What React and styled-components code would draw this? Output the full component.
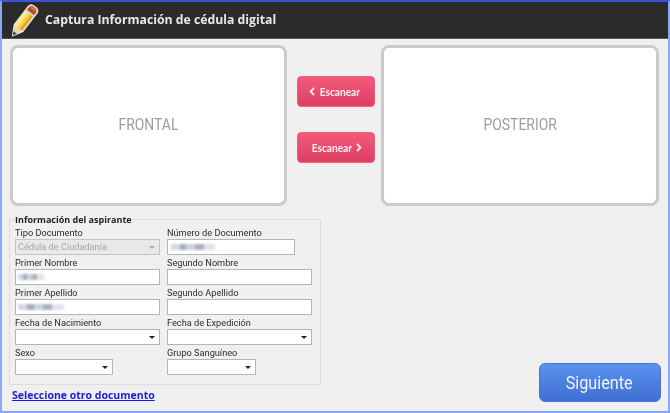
import React from "react";
import styled, { createGlobalStyle } from "styled-components";

const Global = createGlobalStyle`
  html, body { margin: 0; padding: 0; background: #f0f0f0; }
  #root { width: 670px; height: 413px; overflow: hidden; }
  * { box-sizing: border-box; }
`;

const Frame = styled.div`
  width: 670px; height: 413px;
  display: flex; flex-direction: column;
  background: #f0f0f0;
  border-top: 2px solid #3a56d8;
  border-left: 2px solid #8aa6f7;
  border-right: 2px solid #8aa6f7;
  border-bottom: 2px solid #8aa6f7;
  font-family: "Open Sans", sans-serif;
  filter: blur(0.3px);
`;

const Header = styled.header`
  height: 37px; flex: none;
  background: #2b2b2b;
  border-bottom: 1px solid #555;
  display: flex; align-items: center;
  padding: 0 0 0 8px; gap: 5px;
`;

const Title = styled.h1`
  margin: 0; color: #e8e8e8;
  font: 700 12.25px/1 "Open Sans", sans-serif;
`;

const ScanRow = styled.section`
  display: flex; align-items: flex-start;
  padding: 6px 9px 0 8px;
`;

const Card = styled.div`
  width: ${p => p.$w}px; height: 161px;
  background: #fff;
  border: 3px solid #cbcbcb;
  border-radius: 8px;
  display: flex; align-items: center; justify-content: center;
  padding-bottom: 2px;
  color: #9c9c9c;
  font: 400 16px/1 "Roboto", sans-serif;
`;

const CardLabel = styled.span`
  display: inline-block;
  transform: scaleX(0.87);
`;

const ScanButtons = styled.div`
  width: 95px; padding: 31px 0 0 10px;
  display: flex; flex-direction: column; gap: 25px;
`;

const ScanButton = styled.button`
  width: 78px; height: 31px; padding: 0;
  border: 1px solid #e9637f; border-radius: 4px;
  background: linear-gradient(#f25a7c, #de3f63);
  color: #fdeef1;
  font: 700 11.5px/1 "Lato", sans-serif;
  display: flex; align-items: center; justify-content: center; gap: 2px;
`;

const ScanLabel = styled.span`
  display: inline-block;
  transform: scaleX(0.88);
`;

const Bottom = styled.div`
  flex: 1; display: flex; justify-content: space-between; align-items: flex-end;
  padding: 0 7px 9px 7px;
`;

const Left = styled.div`
  display: flex; flex-direction: column;
`;

const Fieldset = styled.fieldset`
  margin: 0; width: 312px; height: 171px;
  padding: 1px 0 0 5px;
  border: 1px solid #dcdcdc;
  display: grid;
  grid-template-columns: 152px 1fr;
  grid-auto-rows: 30px;
  align-content: start;
`;

const Legend = styled.legend`
  padding: 0; margin-left: 0;
  font: 700 9px/11px "Open Sans", sans-serif;
  color: #222;
`;

const Field = styled.label`
  display: flex; flex-direction: column;
  height: 30px;
`;

const Caption = styled.span`
  height: 13px;
  font: 400 9.2px/13px "Roboto", sans-serif;
  color: #2c2c2c;
  white-space: nowrap;
`;

const Box = styled.div`
  width: ${p => p.$w}px; height: 16px;
  background: ${p => (p.$disabled ? "#e9e9e9" : "#fff")};
  border: 1px solid ${p => (p.$disabled ? "#c4c4c4" : "#b5b5b5")};
  display: flex; align-items: center; justify-content: space-between;
  padding: 0 4px 0 2px;
  font: 400 9.2px/1 "Roboto", sans-serif;
  color: #a5a5a5;
  overflow: hidden;
`;

const Redacted = styled.span`
  display: block; width: ${p => p.$w}px; height: 6px;
  margin-left: ${p => p.$x || 0}px;
  background: linear-gradient(90deg, #d3d8e0 0 20%, #a5acb9 20% 35%, #ccd2dc 35% 55%, #aab1bd 55% 75%, #e0e4ea 75% 100%);
  filter: blur(1.3px);
`;

const Arrow = styled.span`
  margin-left: auto;
  width: 0; height: 0;
  border-left: 3px solid transparent;
  border-right: 3px solid transparent;
  border-top: 3px solid ${p => (p.$disabled ? "#a8a8a8" : "#222")};
`;

const OtherLink = styled.a`
  margin: 3px 0 0 3px;
  font: 700 10.5px/14px "Open Sans", sans-serif;
  color: #1a1ae6;
  text-decoration: underline;
`;

const NextButton = styled.button`
  width: 122px; height: 39px; padding: 0 2px 0 0;
  border: 1px solid #4f72d8; border-radius: 6px;
  background: linear-gradient(#5a92ef, #3f6fd2);
  color: #eef4ff;
  font: 400 18px/1 "Roboto", sans-serif;
`;

const NextLabel = styled.span`
  display: inline-block;
  transform: scaleX(0.9);
`;

const Pencil = () => (
  <svg width="30" height="35" viewBox="0 0 30 35" aria-hidden="true" style={{ overflow: "visible" }}>
    <g transform="translate(2.5 33) rotate(37.5)">
      <path d="M0 0 L-5.5 -10 V-33 Q-5.5 -37 0 -37 Q5.5 -37 5.5 -33 V-10 Z" fill="#f3efe4" stroke="#e8e3d6" strokeWidth="1.2" strokeLinejoin="round" />
      <path d="M0 -1 L-4.5 -10 H4.5 Z" fill="#ecd3a8" />
      <path d="M0 -0.5 L-1.9 -4.4 H1.9 Z" fill="#3a3a3a" />
      <rect x="-4.5" y="-28" width="3" height="18" fill="#fdea80" />
      <rect x="-1.5" y="-28" width="3" height="18" fill="#f7d23a" />
      <rect x="1.5" y="-28" width="3" height="18" fill="#e2a622" />
      <rect x="-4.5" y="-29.5" width="9" height="1.5" fill="#d8d4c6" />
      <path d="M-4.5 -29.5 V-32.5 Q-4.5 -36 0 -36 Q4.5 -36 4.5 -32.5 V-29.5 Z" fill="#b5502a" />
      <path d="M-3 -34.4 Q0 -36 3 -34.4 L3 -33.4 H-3 Z" fill="#dd8a5c" />
    </g>
  </svg>
);

const Chevron = ({ dir }) => (
  <svg width="6" height="9" viewBox="0 0 6 9" aria-hidden="true">
    <path d={dir === "left" ? "M5 1 L1.6 4.5 L5 8" : "M1 1 L4.4 4.5 L1 8"} fill="none" stroke="#fdeef1" strokeWidth="1.8" />
  </svg>
);

export default function App() {
  return (
    <Frame>
      <Global />
      <Header>
        <Pencil />
        <Title>Captura Información de cédula digital</Title>
      </Header>
      <ScanRow>
        <Card $w={277}><CardLabel>FRONTAL</CardLabel></Card>
        <ScanButtons>
          <ScanButton><Chevron dir="left" /><ScanLabel>Escanear</ScanLabel></ScanButton>
          <ScanButton><ScanLabel>Escanear</ScanLabel><Chevron dir="right" /></ScanButton>
        </ScanButtons>
        <Card $w={278}><CardLabel>POSTERIOR</CardLabel></Card>
      </ScanRow>
      <Bottom>
        <Left>
          <Fieldset>
            <Legend>Información del aspirante</Legend>
            <Field><Caption>Tipo Documento</Caption><Box $w={145} $disabled>Cédula de Ciudadanía<Arrow $disabled /></Box></Field>
            <Field><Caption>Número de Documento</Caption><Box $w={128}><Redacted $w={44} $x={1} /></Box></Field>
            <Field><Caption>Primer Nombre</Caption><Box $w={145}><Redacted $w={26} /></Box></Field>
            <Field><Caption>Segundo Nombre</Caption><Box $w={145} /></Field>
            <Field><Caption>Primer Apellido</Caption><Box $w={145}><Redacted $w={46} /></Box></Field>
            <Field><Caption>Segundo Apellido</Caption><Box $w={145} /></Field>
            <Field><Caption>Fecha de Nacimiento</Caption><Box $w={145}><Arrow /></Box></Field>
            <Field><Caption>Fecha de Expedición</Caption><Box $w={145}><Arrow /></Box></Field>
            <Field><Caption>Sexo</Caption><Box $w={98}><Arrow /></Box></Field>
            <Field><Caption>Grupo Sanguíneo</Caption><Box $w={89}><Arrow /></Box></Field>
          </Fieldset>
          <OtherLink href="#">Seleccione otro documento</OtherLink>
        </Left>
        <NextButton><NextLabel>Siguiente</NextLabel></NextButton>
      </Bottom>
    </Frame>
  );
}
